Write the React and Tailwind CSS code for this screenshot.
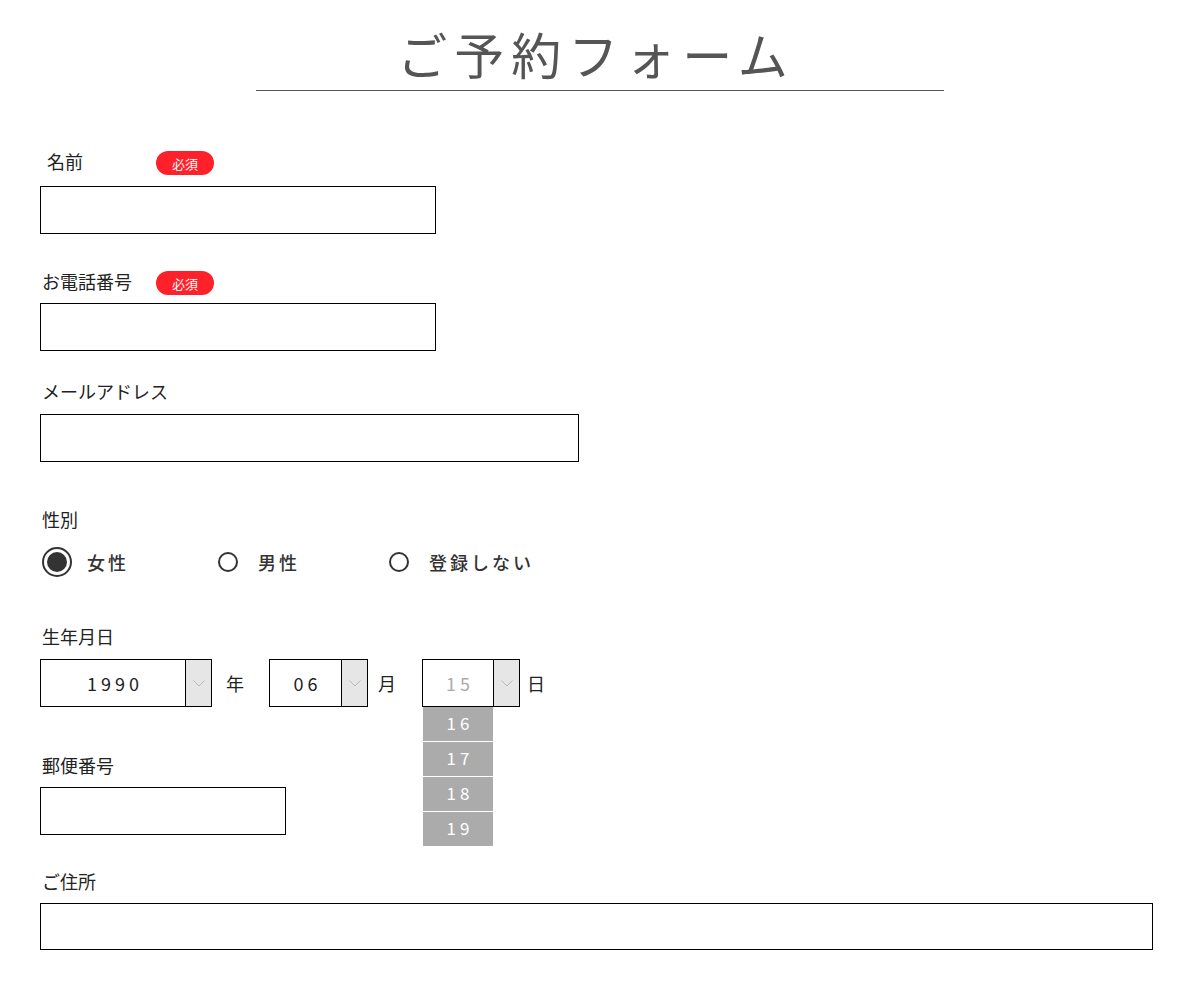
import React from 'react';

const Badge = () => (
  <span className="flex h-[24px] w-[58px] items-center justify-center rounded-full bg-[#ff2129] text-[13px] leading-none text-white">
    必須
  </span>
);

const Chevron = () => (
  <svg width="12" height="7" viewBox="0 0 12 7" fill="none">
    <polyline points="0.5,0.5 6,6 11.5,0.5" stroke="#b8b8b8" strokeWidth="1" />
  </svg>
);

const Select = ({ value, className, muted, options }) => (
  <div className={`relative flex h-[48px] border border-black ${className}`}>
    <div className={`flex flex-1 items-center justify-center pl-[4px] text-[18px] tracking-[4px] ${muted ? 'text-[#ababab]' : 'text-[#222]'}`}>
      {value}
    </div>
    <div className="flex w-[26px] items-center justify-center border-l border-black bg-[#e6e6e6]">
      <Chevron />
    </div>
    {options && (
      <div className="absolute left-0 top-[47px] flex w-[70px] flex-col gap-px">
        {options.map(o => (
          <div key={o} className="flex h-[34px] items-center justify-center bg-[#ababab] pb-[3px] pl-[4px] text-[17px] tracking-[4px] text-white">
            {o}
          </div>
        ))}
      </div>
    )}
  </div>
);

const Radio = ({ label, checked }) => (
  <label className="flex w-[171px] items-center">
    {checked ? (
      <span className="flex h-[30px] w-[30px] items-center justify-center rounded-full border-2 border-[#333]">
        <span className="h-[20px] w-[20px] rounded-full bg-[#333]" />
      </span>
    ) : (
      <span className="flex h-[30px] w-[30px] items-center justify-center">
        <span className="h-[20px] w-[20px] rounded-full border-2 border-[#333]" />
      </span>
    )}
    <span className="ml-[15px] text-[18px] font-medium tracking-[3px] text-[#333]">{label}</span>
  </label>
);

const Label = ({ children }) => (
  <div className="h-[24px] pl-[2px] text-[18px] leading-[20px] text-[#222]">{children}</div>
);

export default function App() {
  return (
    <div className="min-h-[995px] bg-white font-['Noto_Sans_CJK_JP','Noto_Sans',sans-serif]">
      <h1 className="mx-auto mt-[16px] w-[688px] border-b border-[#555] pr-[8px] text-center text-[50px] font-normal leading-[74px] tracking-[7px] text-[#555]">
        ご予約フォーム
      </h1>

      <form className="pl-[40px]">
        <div className="mt-[60px]">
          <div className="flex h-[24px] items-center">
            <span className="w-[116px] pb-[4px] pl-[7px] text-[18px] leading-[20px] text-[#222]">名前</span>
            <Badge />
          </div>
          <input type="text" className="mt-[11px] block h-[48px] w-[396px] border border-black px-3 outline-none" />
        </div>

        <div className="mt-[37px]">
          <div className="flex h-[24px] items-center">
            <span className="w-[116px] pb-[4px] pl-[2px] text-[18px] leading-[20px] text-[#222]">お電話番号</span>
            <Badge />
          </div>
          <input type="tel" className="mt-[8px] block h-[48px] w-[396px] border border-black px-3 outline-none" />
        </div>

        <div className="mt-[30px]">
          <Label>メールアドレス</Label>
          <input type="email" className="mt-[9px] block h-[48px] w-[539px] border border-black px-3 outline-none" />
        </div>

        <div className="mt-[47px]">
          <Label>性別</Label>
          <div className="ml-[2px] mt-[14px] flex h-[30px] items-center">
            <Radio label="女性" checked />
            <Radio label="男性" />
            <Radio label="登録しない" />
          </div>
        </div>

        <div className="mt-[49px]">
          <Label>生年月日</Label>
          <div className="mt-[9px] flex items-center text-[18px] text-[#222]">
            <Select value="1990" className="w-[172px]" />
            <span className="ml-[14px]">年</span>
            <Select value="06" className="ml-[25px] w-[99px]" />
            <span className="ml-[10px]">月</span>
            <Select value="15" muted className="ml-[26px] w-[98px]" options={['16', '17', '18', '19']} />
            <span className="ml-[7px]">日</span>
          </div>
        </div>

        <div className="mt-[48px]">
          <Label>郵便番号</Label>
          <input type="text" className="mt-[8px] block h-[48px] w-[246px] border border-black px-3 outline-none" />
        </div>

        <div className="mt-[36px]">
          <Label>ご住所</Label>
          <input type="text" className="mt-[8px] block h-[47px] w-[1113px] border border-black px-3 outline-none" />
        </div>
      </form>
    </div>
  );
}
